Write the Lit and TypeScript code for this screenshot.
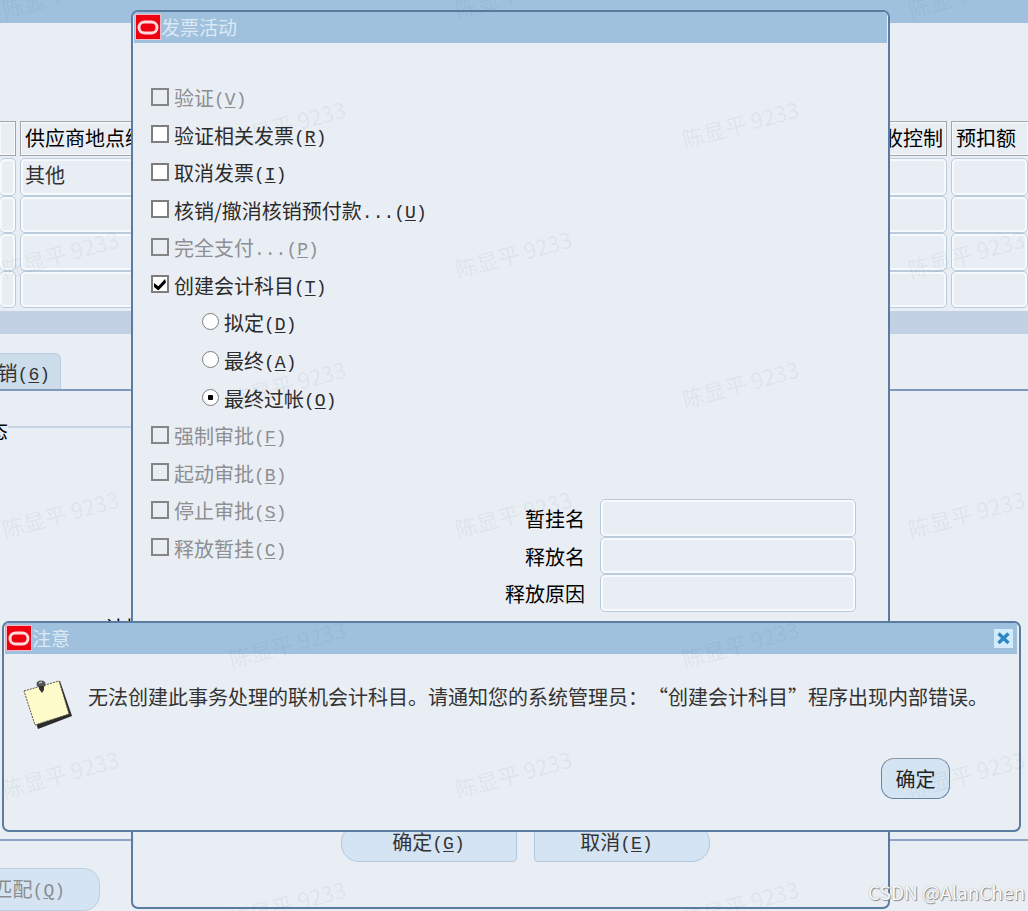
import { LitElement, html, css, nothing } from "lit";
import { customElement, property } from "lit/decorators.js";

const base = css`
  *,
  *::before,
  *::after {
    box-sizing: border-box;
  }
  button,
  input {
    font: inherit;
    color: inherit;
    margin: 0;
  }
  .latin {
    font-family: "Liberation Mono", monospace;
    font-size: 18px;
    vertical-align: 1px;
  }
  .latin u {
    text-decoration-thickness: 1px;
    text-underline-offset: 2px;
  }
`;

const accel = (key: string, lead = "") =>
  html`<span class="latin">${lead}(<u>${key}</u>)</span>`;

/* Title bar with the red product badge */
@customElement("window-title")
class WindowTitle extends LitElement {
  @property() caption = "";
  @property({ type: Boolean }) closable = false;

  static styles = [
    base,
    css`
      :host {
        display: flex;
        align-items: center;
        height: 31px;
        padding: 0 4px 1px 1px;
        background: #9fc1dd;
        color: #dce9f5;
        font-size: 19px;
        line-height: 30px;
      }
      h2 {
        flex: 1;
        margin: 0;
        font: inherit;
      }
      .badge {
        width: 26px;
        height: 26px;
      }
      .close {
        display: block;
        width: 19px;
        height: 19px;
        padding: 0;
        border: 0;
        background: #d3ecfb;
      }
      .close svg {
        display: block;
      }
    `,
  ];

  render() {
    return html`
      <svg class="badge" viewBox="0 0 26 26" aria-hidden="true">
        <rect width="26" height="26" fill="#f6b9c2" />
        <rect x="1" y="1" width="24" height="24" fill="#ee0010" />
        <rect x="4" y="8" width="18" height="11" rx="5.5" fill="none" stroke="#ffd9dc" stroke-width="3" />
      </svg>
      <h2>${this.caption}</h2>
      ${this.closable
        ? html`<button class="close" aria-label="关闭">
            <svg width="19" height="19" viewBox="0 0 19 19">
              <path d="M4.5 4.5 14.5 14M14.5 4.5 4.5 14" stroke="#2f86c4" stroke-width="3.4" />
            </svg>
          </button>`
        : nothing}
    `;
  }
}

interface Option {
  text: string;
  key: string;
  lead?: string;
  kind?: "radio";
  checked?: boolean;
  disabled?: boolean;
}

const OPTIONS: Option[] = [
  { text: "验证", key: "V", disabled: true },
  { text: "验证相关发票", key: "R" },
  { text: "取消发票", key: "I" },
  { text: "核销/撤消核销预付款", key: "U", lead: "..." },
  { text: "完全支付", key: "P", lead: "...", disabled: true },
  { text: "创建会计科目", key: "T", checked: true },
  { text: "拟定", key: "D", kind: "radio" },
  { text: "最终", key: "A", kind: "radio" },
  { text: "最终过帐", key: "O", kind: "radio", checked: true },
  { text: "强制审批", key: "F", disabled: true },
  { text: "起动审批", key: "B", disabled: true },
  { text: "停止审批", key: "S", disabled: true },
  { text: "释放暂挂", key: "C", disabled: true },
];

/* The dialog that lists what can be done with an invoice */
@customElement("invoice-actions")
class InvoiceActions extends LitElement {
  static styles = [
    base,
    css`
      :host {
        display: flex;
        flex-direction: column;
        padding: 0 1px;
        border: 2px solid #5c7ba1;
        border-radius: 7px;
        background: #e9eef4;
        overflow: hidden;
      }
      .body {
        display: grid;
        grid-template-columns: 1fr 353px;
        padding: 35px 31px 0 17px;
      }
      .options {
        display: grid;
        grid-auto-rows: 1fr;
        height: 488px;
        margin-bottom: 46px;
      }
      .option {
        display: flex;
        align-items: center;
        gap: 5px;
        color: #2b2b2b;
        line-height: 28px;
      }
      .option span.text {
        padding-top: 5px;
      }
      .radio {
        padding-left: 51px;
      }
      .disabled {
        color: #8d8f92;
      }
      input[type="checkbox"],
      input[type="radio"] {
        appearance: none;
        display: grid;
        place-items: center;
        flex: none;
        width: 18px;
        height: 18px;
        border: 2px solid #7d7d7d;
        background: #fff;
      }
      input[type="radio"] {
        width: 17px;
        height: 17px;
        border-radius: 50%;
        border-width: 1px;
      }
      input:disabled {
        background: transparent;
        border-color: #858585;
      }
      input[type="checkbox"]:checked::before {
        content: "";
        width: 12px;
        height: 12px;
        background: #000;
        clip-path: polygon(0 38%, 36% 66%, 92% 4%, 100% 34%, 36% 100%, 0 72%);
      }
      input[type="radio"]:checked::before {
        content: "";
        width: 5px;
        height: 5px;
        border-radius: 1px;
        background: #000;
      }
      .fields {
        align-self: end;
        display: grid;
        grid-template-columns: 1fr 256px;
        grid-template-rows: repeat(3, minmax(0, 1fr));
        column-gap: 15px;
        height: 113px;
        color: #000;
      }
      .fields label {
        padding-top: 3px;
        text-align: right;
        line-height: 34px;
      }
      .fields input {
        width: 100%;
        height: 100%;
        padding: 0 6px;
        border: 1px solid #b9cbdc;
        border-radius: 5px;
        background: transparent;
        box-shadow: inset 0 0 0 2px #f7fafd;
      }
      footer {
        display: flex;
        justify-content: center;
        gap: 17px;
        margin-top: 212px;
        padding: 0 0 45px 29px;
      }
      footer button {
        width: 176px;
        height: 38px;
        padding: 0;
        border: 1px solid #b2c8df;
        background: #d5e4f3;
        color: #333;
        line-height: 34px;
      }
      .ok {
        border-radius: 18px 4px 4px 18px;
      }
      .cancel {
        border-radius: 4px 18px 18px 4px;
      }
      footer .cancel {
        padding-right: 10px;
      }
    `,
  ];

  private option(o: Option) {
    const classes = `option ${o.kind ?? ""} ${o.disabled ? "disabled" : ""}`;
    return html`<label class=${classes}>
      <input
        type=${o.kind ?? "checkbox"}
        name=${o.kind ? "posting" : "action"}
        .checked=${!!o.checked}
        ?disabled=${!!o.disabled}
      />
      <span class="text">${o.text}${accel(o.key, o.lead)}</span>
    </label>`;
  }

  render() {
    return html`
      <window-title caption="发票活动"></window-title>
      <div class="body">
        <div class="options">${OPTIONS.map((o) => this.option(o))}</div>
        <div class="fields">
          <label for="hold">暂挂名</label><input id="hold" />
          <label for="release">释放名</label><input id="release" />
          <label for="reason">释放原因</label><input id="reason" />
        </div>
      </div>
      <footer>
        <button class="ok">确定${accel("G")}</button>
        <button class="cancel">取消${accel("E")}</button>
      </footer>
    `;
  }
}

/* The error notice on top of everything */
@customElement("notice-dialog")
class NoticeDialog extends LitElement {
  static styles = [
    base,
    css`
      :host {
        display: flex;
        flex-direction: column;
        padding: 0 2px 0 1px;
        border: 2px solid #5c7ba1;
        border-radius: 7px;
        background: #e9eef4;
        overflow: hidden;
      }
      .message {
        display: flex;
        gap: 14px;
        padding: 24px 0 0 17px;
        color: #333;
      }
      .message p {
        margin: 4px 0 0;
        line-height: 30px;
        white-space: nowrap;
        text-spacing-trim: space-all;
      }
      .note {
        flex: none;
        width: 52px;
        height: 54px;
      }
      footer {
        display: flex;
        justify-content: flex-end;
        padding: 26px 67px 31px;
      }
      footer button {
        width: 69px;
        height: 41px;
        padding: 0;
        border: 1px solid #6683a6;
        border-top-color: #8b98a8;
        border-radius: 13px;
        background: #d5e4f3;
        color: #222;
        line-height: 38px;
      }
    `,
  ];

  render() {
    return html`
      <window-title caption="注意" closable></window-title>
      <div class="message">
        <svg class="note" viewBox="0 0 52 54" aria-hidden="true">
          <path d="M3 14 38 3 50 38 16 51Z" fill="#2b2b2b" />
          <path d="M2 13 37 3 47 36 13 47Z" fill="#fffccb" stroke="#55554a" stroke-width="1" stroke-dasharray="2 1" />
          <ellipse cx="19" cy="6" rx="4.5" ry="3.5" fill="#555" />
          <path d="M17 8h5v4l-2 3-3-4Z" fill="#333" />
          <path d="M17 5l3-1" stroke="#bbb" stroke-width="1.5" />
        </svg>
        <p>无法创建此事务处理的联机会计科目。请通知您的系统管理员：“创建会计科目”程序出现内部错误。</p>
      </div>
      <footer><button>确定</button></footer>
    `;
  }
}

const COLUMNS = ["", "供应商地点编号", "接收控制", "预扣额"];
const ROWS = [["", "其他", "", ""], ["", "", "", ""], ["", "", "", ""], ["", "", "", ""]];

/* Staggered user stamps: columns alternate between two row phases */
const STAMPS = Array.from({ length: 8 }, (_, r) =>
  Array.from({ length: 3 }, (_, c) => ({
    x: 60 + c * 453 + (r % 2 ? 227 : 0),
    y: -7 + r * 130,
  })),
)
  .flat()
  .filter((s) => s.x < 1100);

@customElement("app-root")
class AppRoot extends LitElement {
  static styles = [
    base,
    css`
      :host {
        display: block;
        position: relative;
        min-height: 100vh;
        overflow: hidden;
        background: #e9eef4;
        color: #333;
        font-family: "Noto Sans CJK SC", sans-serif;
        font-size: 20px;
        line-height: 30px;
      }
      .bar {
        height: 23px;
        background: #9fc1dd;
      }
      table {
        display: grid;
        gap: 2px;
        margin-top: 98px;
      }
      thead,
      tbody {
        display: grid;
      }
      tr {
        display: grid;
        grid-template-columns: 16px 300px 1fr 77px;
        column-gap: 4px;
      }
      tbody {
        grid-auto-rows: 1fr;
        height: 150px;
      }
      th {
        height: 35px;
        padding: 0 4px;
        border: 1px solid #a3a5a8;
        box-shadow: inset 0 0 0 1px #f7fafd;
        color: #000;
        font-weight: 400;
        line-height: 32px;
        text-align: left;
        white-space: nowrap;
      }
      th:first-child,
      td:first-child input {
        border-left: 0;
      }
      th:nth-child(3) {
        padding-right: 3px;
        text-align: right;
      }
      th:last-child {
        border-right: 0;
      }
      td {
        display: grid;
        padding: 0;
      }
      td input {
        width: 100%;
        min-width: 0;
        height: 100%;
        padding: 0 4px 4px;
        border: 1px solid #b9cbdc;
        border-radius: 5px;
        background: transparent;
        box-shadow: inset 0 0 0 2px #f7fafd;
      }
      .scroll {
        height: 23px;
        margin-top: 3px;
        background: #c2d2e4;
      }
      .tabs {
        display: flex;
        margin-top: 19px;
        border-bottom: 2px solid #7e99ba;
      }
      .tab {
        width: 101px;
        height: 36px;
        margin-left: -40px;
        padding: 0 10px 0 0;
        border: 1px solid #bccde0;
        border-bottom: 0;
        border-radius: 6px 6px 0 0;
        background: #cddcea;
        line-height: 38px;
        text-align: right;
      }
      .panel {
        height: 450px;
        padding-top: 22px;
        border-bottom: 2px solid #8da6c3;
      }
      .group {
        display: flex;
        align-items: flex-start;
        width: 50%;
        color: #000;
      }
      .group h3 {
        width: 40px;
        margin: 3px 0 0 -32px;
        font: inherit;
      }
      .group::after {
        content: "";
        flex: 1;
        margin-top: 13px;
        border-top: 2px solid #c5d4e4;
      }
      .detail {
        margin: 167px 0 0 105px;
        color: #000;
      }
      .match {
        display: block;
        width: 160px;
        height: 43px;
        margin: 27px 0 0 -60px;
        padding: 0 34px 0 0;
        border: 1px solid #bccfe3;
        border-radius: 16px;
        background: #d5e4f3;
        color: #8b8d90;
        text-align: right;
      }
      invoice-actions {
        position: absolute;
        top: 10px;
        left: 131px;
        width: 759px;
      }
      notice-dialog {
        position: absolute;
        top: 621px;
        left: 2px;
        right: 7px;
      }
      .stamp {
        position: absolute;
        transform: translate(-50%, -50%) rotate(-15deg);
        color: rgba(70, 90, 110, 0.08);
        font-size: 22px;
        white-space: nowrap;
        pointer-events: none;
      }
      .credit {
        position: absolute;
        right: 3px;
        bottom: 4px;
        color: #fbfcfd;
        font-size: 19px;
        text-shadow: 1px 1px 1px #888, 0 0 1px #999;
        pointer-events: none;
      }
    `,
  ];

  render() {
    return html`
      <main lang="zh-CN">
        <div class="bar"></div>
        <table>
          <thead>
            <tr>${COLUMNS.map((c) => html`<th>${c}</th>`)}</tr>
          </thead>
          <tbody>
            ${ROWS.map(
              (row) => html`<tr>
                ${row.map((v, i) => html`<td><input aria-label=${COLUMNS[i] || "行"} .value=${v} /></td>`)}
              </tr>`,
            )}
          </tbody>
        </table>
        <div class="scroll"></div>
        <div class="tabs"><button class="tab">核销${accel("6")}</button></div>
        <section class="panel">
          <div class="group"><h3>状态</h3></div>
          <div class="detail">计划</div>
        </section>
        <button class="match" disabled>匹配${accel("Q")}</button>
      </main>
      <invoice-actions lang="zh-CN" role="dialog"></invoice-actions>
      <notice-dialog lang="zh-CN" role="alertdialog"></notice-dialog>
      ${STAMPS.map((s) => html`<span class="stamp" style="left:${s.x}px;top:${s.y}px">陈显平 9233</span>`)}
      <span class="credit">CSDN @AlanChen</span>
    `;
  }
}
